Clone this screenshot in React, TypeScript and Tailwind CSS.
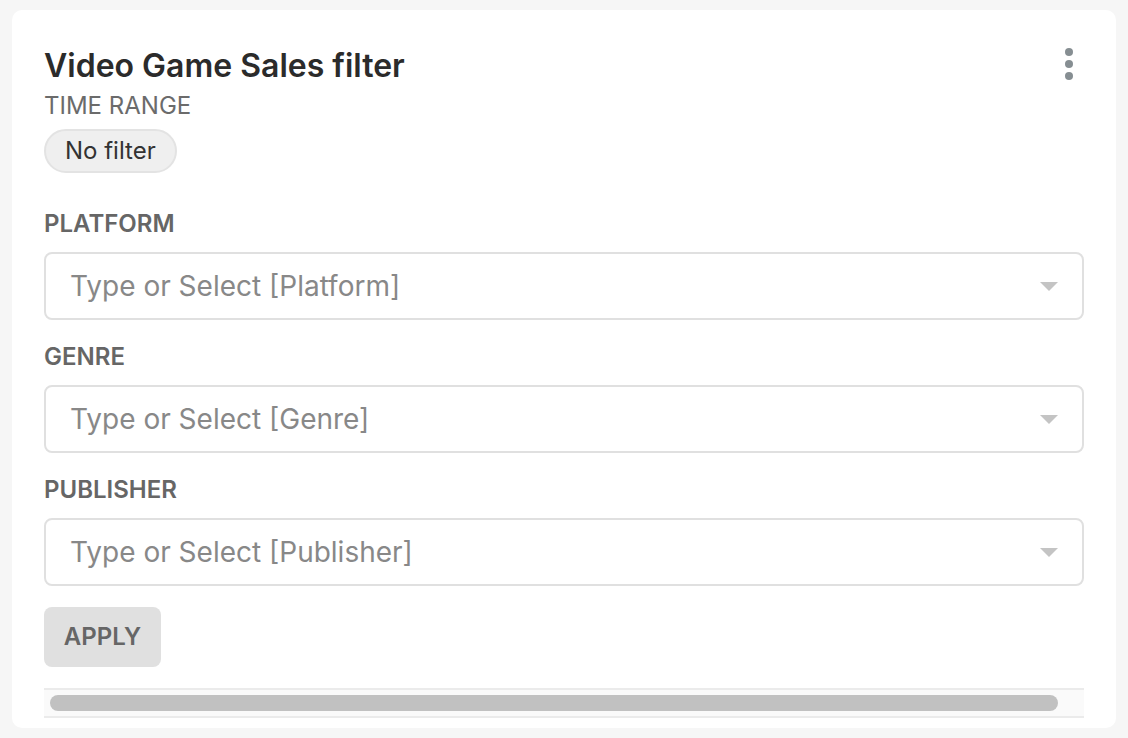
import React from 'react'

const font = { fontFamily: 'Inter, "Noto Sans", sans-serif' }

function SelectField({ label, placeholder }: { label: string; placeholder: string }) {
  return (
    <div className="flex flex-col">
      <div className="text-[24px] leading-[28px] font-semibold text-[#666666] mb-[14px]">{label}</div>
      <div className="flex items-center justify-between h-[68px] border-2 border-[#e0e0e0] rounded-[8px] pl-[24px] pr-[24px] bg-white">
        <span className="text-[28px] leading-[34px] text-[#888888]">{placeholder}</span>
        <svg width="18" height="9" viewBox="0 0 18 9">
          <path d="M0 0 L18 0 L9 9 Z" fill="#c4c4c4" />
        </svg>
      </div>
    </div>
  )
}

export default function App() {
  return (
    <div className="w-[1128px] h-[738px] bg-[#f6f6f6] pt-[10px] pl-[12px]" style={font}>
      <div className="w-[1104px] h-[718px] bg-white rounded-[10px] pl-[32px] pr-[32px] pt-[37px]">
        <div className="flex justify-between items-start">
          <div className="text-[32px] leading-[38px] font-semibold text-[#2b2b2b]">
            Video Game Sales filter
          </div>
          <div className="flex flex-col gap-[4px] mt-[1px] mr-[11px]">
            <span className="w-[8px] h-[8px] rounded-full bg-[#868e92]" />
            <span className="w-[8px] h-[8px] rounded-full bg-[#868e92]" />
            <span className="w-[8px] h-[8px] rounded-full bg-[#868e92]" />
          </div>
        </div>
        <div className="text-[24px] leading-[28px] text-[#6b6b6b] mt-[7px]">TIME RANGE</div>
        <div className="mt-[9px] inline-flex items-center h-[44px] px-[19px] rounded-full bg-[#efefef] border-2 border-[#e3e3e3] text-[24px] text-[#333333]">
          No filter
        </div>
        <div className="flex flex-col gap-[23px] mt-[37px]">
          <SelectField label="PLATFORM" placeholder="Type or Select [Platform]" />
          <SelectField label="GENRE" placeholder="Type or Select [Genre]" />
          <SelectField label="PUBLISHER" placeholder="Type or Select [Publisher]" />
        </div>
        <button className="mt-[21px] h-[60px] w-[117px] rounded-[8px] bg-[#e0e0e0] text-[24px] font-semibold text-[#666666]">
          APPLY
        </button>
        <div className="mt-[21px] h-[30px] border-y-2 border-[#ebebeb] bg-[#fafafa] flex items-center px-[6px]">
          <div className="h-[16px] w-[1008px] rounded-full bg-[#c1c1c1]" />
        </div>
      </div>
    </div>
  )
}
